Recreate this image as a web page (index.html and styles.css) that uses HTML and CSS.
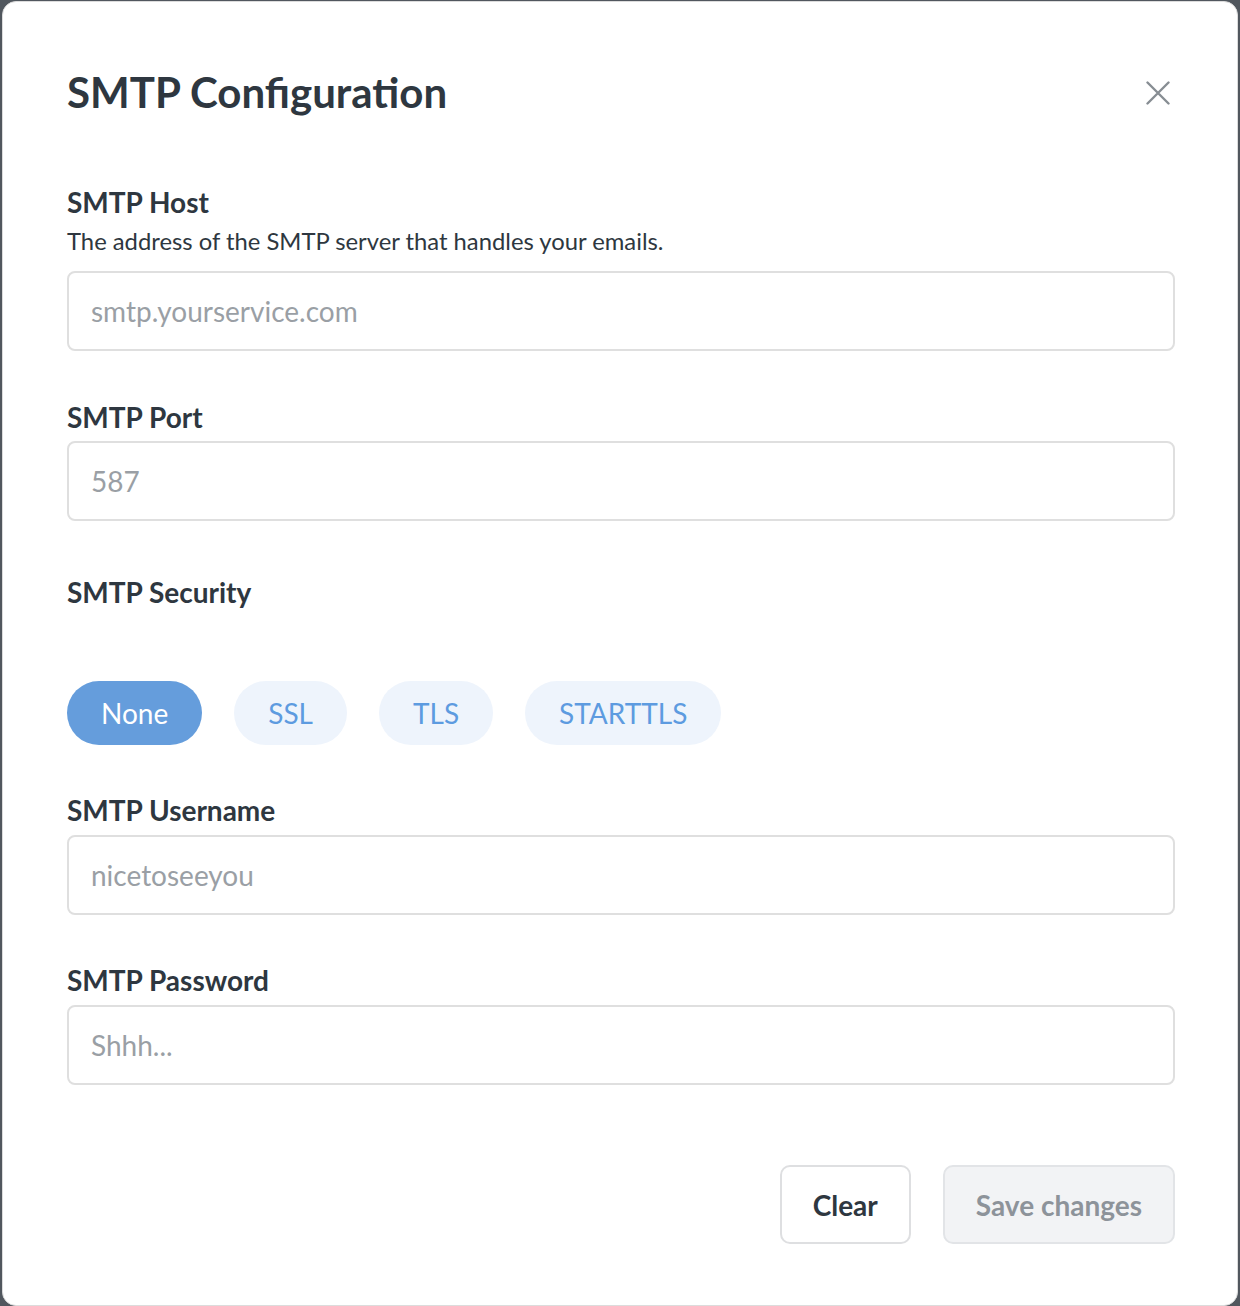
FILE: index.html
```html
<!DOCTYPE html>
<html lang="en">
<head>
<meta charset="utf-8">
<title>SMTP Configuration</title>
<link rel="stylesheet" href="styles.css">
</head>
<body>
<div class="modal">
  <div class="modal-header">
    <h1 class="modal-title">SMTP Configuration</h1>
    <button class="close-btn" aria-label="Close">
      <svg width="24" height="24" viewBox="0 0 24 24" fill="none" stroke="currentColor" stroke-width="2.4" stroke-linecap="round"><path d="M1.5 1.5 L22.5 22.5 M22.5 1.5 L1.5 22.5"/></svg>
    </button>
  </div>

  <div class="field field-host">
    <label class="field-label">SMTP Host</label>
    <p class="field-desc">The address of the SMTP server that handles your emails.</p>
    <input class="text-input" type="text" placeholder="smtp.yourservice.com">
  </div>

  <div class="field field-port">
    <label class="field-label">SMTP Port</label>
    <input class="text-input" type="text" placeholder="587">
  </div>

  <div class="field field-security">
    <label class="field-label label-security">SMTP Security</label>
    <div class="pills">
      <button class="pill pill-active">None</button>
      <button class="pill">SSL</button>
      <button class="pill">TLS</button>
      <button class="pill">STARTTLS</button>
    </div>
  </div>

  <div class="field field-username">
    <label class="field-label">SMTP Username</label>
    <input class="text-input" type="text" placeholder="nicetoseeyou">
  </div>

  <div class="field field-password">
    <label class="field-label">SMTP Password</label>
    <input class="text-input" type="password" placeholder="Shhh...">
  </div>

  <div class="actions">
    <button class="btn btn-clear">Clear</button>
    <button class="btn btn-save">Save changes</button>
  </div>
</div>
</body>
</html>
```

FILE: styles.css
```css
* { box-sizing: border-box; }

html, body {
  margin: 0;
  padding: 0;
}

body {
  background: #51575e;
  font-family: Lato, "Open Sans", Arial, sans-serif;
  color: #2e3740;
  width: 1240px;
  height: 1306px;
  overflow: hidden;
}

.modal {
  margin: 1px 0 0 2px;
  width: 1236px;
  height: 1305px;
  background: #ffffff;
  border: 1px solid #dcdcdc;
  border-radius: 14px;
  padding: 65px 62px 0 64px;
  display: flex;
  flex-direction: column;
}

.modal-header {
  display: flex;
  justify-content: space-between;
  align-items: center;
  margin-bottom: 69px;
}

.modal-title {
  margin: 0;
  font-size: 42px;
  line-height: 1.2;
  font-weight: 700;
  color: #2e3740;
}

.close-btn {
  width: 34px;
  height: 34px;
  padding: 0;
  margin-top: 2px;
  border: none;
  background: none;
  color: #878d93;
  display: flex;
  align-items: center;
  justify-content: center;
}

.field {
  display: flex;
  flex-direction: column;
}

.field-label {
  font-size: 28px;
  line-height: 32px;
  font-weight: 700;
  color: #2e3740;
  margin-bottom: 9px;
}

.field-desc {
  margin: 0 0 16px;
  font-size: 23.8px;
  line-height: 28px;
  color: #2e3740;
}

.text-input {
  height: 80px;
  width: 100%;
  border: 2px solid #dfdfdf;
  border-radius: 8px;
  padding: 0 22px;
  font-family: Lato, "Open Sans", Arial, sans-serif;
  font-size: 28px;
  color: #2e3740;
  background: #fff;
  outline: none;
}

.text-input::placeholder {
  color: #9a9fa5;
  opacity: 1;
}

.field-host { margin-bottom: 50px; }
.field-port { margin-bottom: 55px; }
.field-security { margin-bottom: 49px; }
.field-username { margin-bottom: 49px; }
.field-password { margin-bottom: 80px; }

.field-port .field-label { margin-bottom: 8px; }

.label-security { margin-bottom: 73px; }

.pills {
  display: flex;
  gap: 32px;
}

.pill {
  height: 64px;
  padding: 0 34px;
  border: none;
  border-radius: 32px;
  background: #eef4fc;
  color: #5d9be0;
  font-family: Lato, "Open Sans", Arial, sans-serif;
  font-size: 28px;
  font-weight: 400;
}

.pill-active {
  background: #659ddc;
  color: #ffffff;
}

.actions {
  display: flex;
  justify-content: flex-end;
  gap: 32px;
}

.btn {
  height: 79px;
  padding: 0 31px;
  border-radius: 10px;
  border: 2px solid #dedfe1;
  font-family: Lato, "Open Sans", Arial, sans-serif;
  font-size: 28px;
  font-weight: 700;
}

.btn-clear {
  background: #ffffff;
  color: #2e3740;
}

.btn-save {
  background: #f2f3f5;
  color: #8d939a;
  border-color: #e2e4e7;
}
```
